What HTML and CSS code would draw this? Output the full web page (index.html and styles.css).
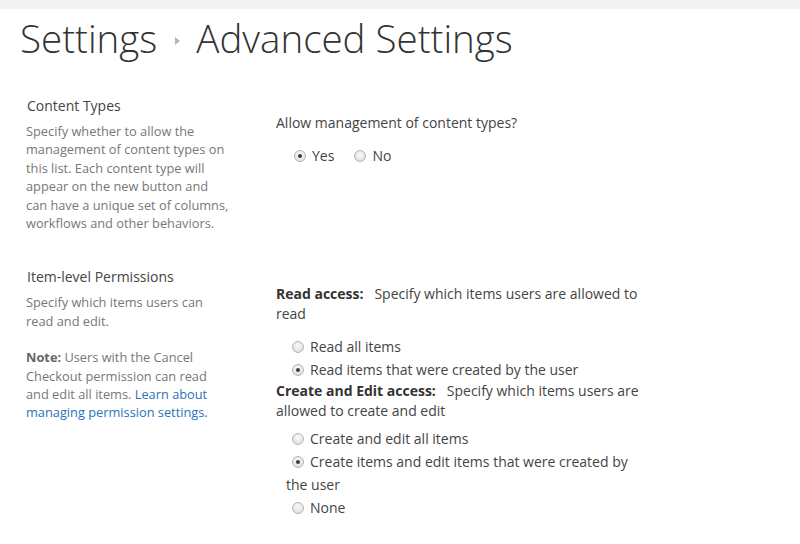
FILE: index.html
```html
<!DOCTYPE html>
<html>
<head>
<meta charset="utf-8">
<link rel="stylesheet" href="styles.css">
</head>
<body>
<div class="topbar"></div>
<h1 class="title"><span>Settings</span><span class="crumb-arrow"></span><span>Advanced Settings</span></h1>
<div class="section s1">
  <div class="left">
    <h2 class="sec-head">Content Types</h2>
    <p class="desc">Specify whether to allow the management of content types on this list. Each content type will appear on the new button and can have a unique set of columns, workflows and other behaviors.</p>
  </div>
  <div class="right">
    <div class="question">Allow management of content types?</div>
    <div class="yesno">
      <span class="opt"><span class="radio checked"></span>Yes</span>
      <span class="opt"><span class="radio"></span>No</span>
    </div>
  </div>
</div>
<div class="section s2">
  <div class="left">
    <h2 class="sec-head">Item-level Permissions</h2>
    <p class="desc">Specify which items users can read and edit.</p>
    <p class="desc note"><b>Note:</b> Users with the Cancel Checkout permission can read and edit all items. <a href="#">Learn about managing permission settings.</a></p>
  </div>
  <div class="right">
    <div class="question wide"><b>Read access:</b>&nbsp;&nbsp; Specify which items users are allowed to read</div>
    <div class="radios r1">
      <div class="row"><span class="radio"></span>Read all items</div>
      <div class="row"><span class="radio checked"></span>Read items that were created by the user</div>
    </div>
    <div class="question wide"><b>Create and Edit access:</b>&nbsp;&nbsp; Specify which items users are allowed to create and edit</div>
    <div class="radios r2">
      <div class="row"><span class="radio"></span>Create and edit all items</div>
      <div class="row"><span class="radio checked"></span>Create items and edit items that were created by the user</div>
      <div class="row"><span class="radio"></span>None</div>
    </div>
  </div>
</div>
</body>
</html>
```
FILE: styles.css
```css
html, body {
  margin: 0;
  padding: 0;
  background: #fff;
}
body {
  font-family: "Open Sans", "Noto Sans", sans-serif;
  color: #444;
  width: 800px;
  height: 544px;
  overflow: hidden;
}
.topbar {
  height: 9px;
  background: #f2f2f2;
}
.title {
  margin: 4px 0 0 0;
  padding: 0 0 0 20px;
  height: 50px;
  font-weight: 300;
  font-size: 38.5px;
  line-height: 50px;
  color: #333;
  display: flex;
  align-items: center;
}
.crumb-arrow {
  display: inline-block;
  width: 0;
  height: 0;
  border-top: 4px solid transparent;
  border-bottom: 4px solid transparent;
  border-left: 5px solid #b5b5b5;
  margin: 6px 16px 0 18px;
}
.section {
  display: flex;
}
.s1 { margin-top: 33px; }
.s2 { margin-top: 35px; }
.left {
  width: 276px;
  flex: none;
  box-sizing: border-box;
  padding-left: 26px;
  padding-right: 44px;
}
.sec-head {
  margin: 0 0 6px 1px;
  font-size: 14px;
  font-weight: 400;
  line-height: 20px;
  color: #444;
}
.desc {
  margin: 0;
  font-size: 12.8px;
  line-height: 18.4px;
  color: #777;
}
.desc.note {
  margin-top: 18px;
}
.desc b {
  font-weight: 700;
  color: #666;
}
.desc a {
  color: #2a72bb;
  text-decoration: none;
}
.right {
  width: 400px;
  padding-top: 17px;
  font-size: 14px;
  color: #444;
}
.question {
  line-height: 19px;
}
.question.wide {
  width: 372px;
  line-height: 19.5px;
}
.question b {
  font-weight: 700;
  color: #333;
}
.yesno {
  margin-top: 14px;
  padding-left: 18px;
  display: flex;
  gap: 20px;
  line-height: 19px;
}
.opt {
  display: inline-flex;
  align-items: center;
}
.radio {
  display: inline-block;
  width: 10px;
  height: 10px;
  border: 1px solid #b4b4b4;
  border-radius: 50%;
  background: radial-gradient(circle at 50% 35%, #fafafa 0%, #e0e0e0 80%);
  margin-right: 6px;
  vertical-align: -1px;
  position: relative;
  box-sizing: content-box;
}
.radio.checked::after {
  content: "";
  position: absolute;
  left: 3px;
  top: 3px;
  width: 4px;
  height: 4px;
  border-radius: 50%;
  background: #3c3c3c;
}
.radios .row {
  line-height: 23px;
  padding-left: 10px;
}
.radios .row .radio {
  margin-left: 6px;
}
.radios.r2 .row {
  width: 360px;
}
.r1 { margin-top: 12px; }
.r2 { margin-top: 7px; }
```
